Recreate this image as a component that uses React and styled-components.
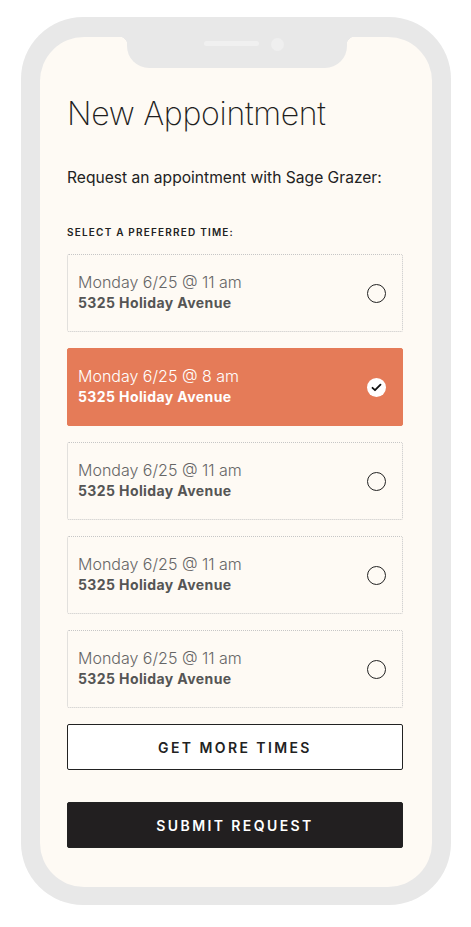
import React, { useState } from 'react';
import styled, { createGlobalStyle } from 'styled-components';

const GlobalStyle = createGlobalStyle`
  html, body {
    margin: 0;
    padding: 0;
    background: #ffffff;
  }
  body {
    font-family: Inter, "Liberation Sans", Arial, sans-serif;
  }
`;

const Page = styled.div`
  width: 471px;
  height: 927px;
  padding: 17px 0 0 21px;
  box-sizing: border-box;
`;

const Phone = styled.div`
  width: 430px;
  height: 888px;
  box-sizing: border-box;
  padding: 20px 19px 18px 19px;
  background: #e8e8e8;
  border-radius: 62px;
`;

const Screen = styled.div`
  position: relative;
  height: 100%;
  box-sizing: border-box;
  background: #fefaf4;
  border-radius: 44px;
  padding: 57px 29px 0 27px;
  display: flex;
  flex-direction: column;
`;

const Notch = styled.div`
  position: absolute;
  top: 0;
  left: 87px;
  width: 220px;
  height: 31px;
  background: #e8e8e8;
  border-radius: 0 0 22px 22px;
  display: flex;
  align-items: center;
  justify-content: center;
  gap: 12px;

  &::before,
  &::after {
    content: '';
    position: absolute;
    top: 0;
    width: 8px;
    height: 8px;
  }
  &::before {
    left: -8px;
    background: radial-gradient(circle at 0 100%, transparent 8px, #e8e8e8 8.5px);
  }
  &::after {
    right: -8px;
    background: radial-gradient(circle at 100% 100%, transparent 8px, #e8e8e8 8.5px);
  }
`;

const Speaker = styled.div`
  width: 55px;
  height: 5px;
  border-radius: 3px;
  background: #f0f0f0;
  margin-top: -18px;
  margin-left: 14px;
`;

const Camera = styled.div`
  width: 13px;
  height: 13px;
  border-radius: 50%;
  background: #efefef;
  margin-top: -17px;
`;

const Title = styled.h1`
  margin: 0;
  font-size: 32px;
  line-height: 40px;
  font-weight: 200;
  color: #1e1e1e;
  letter-spacing: -0.3px;
`;

const Subtitle = styled.p`
  margin: 32px 0 0;
  font-size: 15.6px;
  line-height: 24px;
  font-weight: 400;
  color: #222;
`;

const Label = styled.div`
  margin: 35px 0 15px;
  font-size: 10px;
  line-height: 14px;
  font-weight: 600;
  letter-spacing: 1.2px;
  color: #222;
`;

const List = styled.div`
  display: flex;
  flex-direction: column;
  gap: 16px;
`;

const Slot = styled.div`
  height: 78px;
  box-sizing: border-box;
  display: flex;
  align-items: center;
  justify-content: space-between;
  padding: 0 16px 3px 10px;
  border-radius: 2px;
  border: 1px ${(p) => (p.$selected ? 'solid #e57b58' : 'dotted #c6c6c6')};
  background: ${(p) => (p.$selected ? '#e57b58' : 'transparent')};
  cursor: pointer;
`;

const SlotText = styled.div`
  display: flex;
  flex-direction: column;
`;

const Time = styled.div`
  font-size: 16px;
  line-height: 22px;
  font-weight: 300;
  color: ${(p) => (p.$selected ? '#ffffff' : '#666')};
`;

const Place = styled.div`
  font-size: 14px;
  line-height: 20px;
  font-weight: 700;
  letter-spacing: 0.4px;
  color: ${(p) => (p.$selected ? '#ffffff' : '#555')};
`;

const Radio = styled.div`
  width: 19px;
  height: 19px;
  box-sizing: border-box;
  border-radius: 50%;
  margin-top: 3px;
  border: ${(p) => (p.$selected ? 'none' : '1.5px solid #222')};
  background: ${(p) => (p.$selected ? '#ffffff' : 'transparent')};
  display: flex;
  align-items: center;
  justify-content: center;
`;

const Button = styled.button`
  height: 46px;
  width: 100%;
  box-sizing: border-box;
  border-radius: 2px;
  border: 1.5px solid #222;
  background: ${(p) => (p.$dark ? '#221f20' : '#ffffff')};
  color: ${(p) => (p.$dark ? '#ffffff' : '#222')};
  font-family: Inter, "Liberation Sans", Arial, sans-serif;
  font-size: 14px;
  font-weight: 600;
  letter-spacing: 2.4px;
  margin-top: ${(p) => p.$top}px;
  cursor: pointer;
`;

const Check = () => (
  <svg width="11" height="9" viewBox="0 0 11 9">
    <path d="M1.5 4.8 L4 7.2 L9.5 1.6" fill="none" stroke="#111" strokeWidth="1.8" strokeLinecap="round" strokeLinejoin="round" />
  </svg>
);

const slots = [
  { time: 'Monday 6/25 @ 11 am', place: '5325 Holiday Avenue' },
  { time: 'Monday 6/25 @ 8 am', place: '5325 Holiday Avenue' },
  { time: 'Monday 6/25 @ 11 am', place: '5325 Holiday Avenue' },
  { time: 'Monday 6/25 @ 11 am', place: '5325 Holiday Avenue' },
  { time: 'Monday 6/25 @ 11 am', place: '5325 Holiday Avenue' },
];

export default function App() {
  const [selected, setSelected] = useState(1);
  return (
    <Page>
      <GlobalStyle />
      <Phone>
        <Screen>
          <Notch>
            <Speaker />
            <Camera />
          </Notch>
          <Title>New Appointment</Title>
          <Subtitle>Request an appointment with Sage Grazer:</Subtitle>
          <Label>SELECT A PREFERRED TIME:</Label>
          <List>
            {slots.map((s, i) => {
              const on = i === selected;
              return (
                <Slot key={i} $selected={on} onClick={() => setSelected(i)}>
                  <SlotText>
                    <Time $selected={on}>{s.time}</Time>
                    <Place $selected={on}>{s.place}</Place>
                  </SlotText>
                  <Radio $selected={on}>{on && <Check />}</Radio>
                </Slot>
              );
            })}
          </List>
          <Button $top={16}>GET MORE TIMES</Button>
          <Button $dark $top={32}>SUBMIT REQUEST</Button>
        </Screen>
      </Phone>
    </Page>
  );
}
